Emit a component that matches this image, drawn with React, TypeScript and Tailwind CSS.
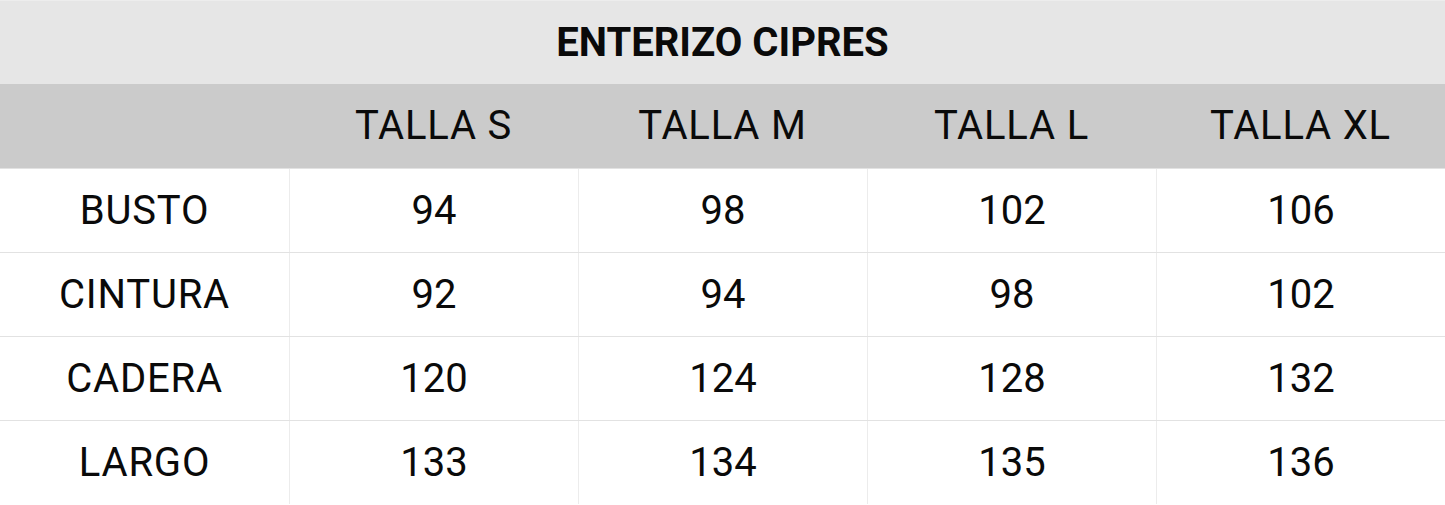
const sizes = ['TALLA S', 'TALLA M', 'TALLA L', 'TALLA XL'];

const rows: [string, number[]][] = [
  ['BUSTO', [94, 98, 102, 106]],
  ['CINTURA', [92, 94, 98, 102]],
  ['CADERA', [120, 124, 128, 132]],
  ['LARGO', [133, 134, 135, 136]],
];

export default function App() {
  return (
    <div className="w-[1445px] h-[505px] bg-white text-[#0a0a0a] font-['Roboto',sans-serif] overflow-hidden">
      {/* titulo */}
      <div className="h-[84px] bg-[#e6e6e6] border-t border-[#ededed] flex items-center justify-center">
        <h1 className="text-[40px] font-bold leading-none">ENTERIZO CIPRES</h1>
      </div>

      {/* cabecera de tallas */}
      <div className="h-[84px] bg-[#cbcbcb] grid grid-cols-5 items-center">
        <div />
        {sizes.map((s) => (
          <div key={s} className="text-center text-[40px] leading-none tracking-[0.02em]">
            {s}
          </div>
        ))}
      </div>

      {/* medidas */}
      {rows.map(([label, vals]) => (
        <div key={label} className="h-[84px] grid grid-cols-5 border-t border-[#e2e2e2]">
          <div className="flex items-center justify-center text-[40px] leading-none tracking-[0.02em]">{label}</div>
          {vals.map((v, i) => (
            <div
              key={i}
              className="flex items-center justify-center border-l border-[#ececec] text-[40px] leading-none"
            >
              {v}
            </div>
          ))}
        </div>
      ))}
    </div>
  );
}
